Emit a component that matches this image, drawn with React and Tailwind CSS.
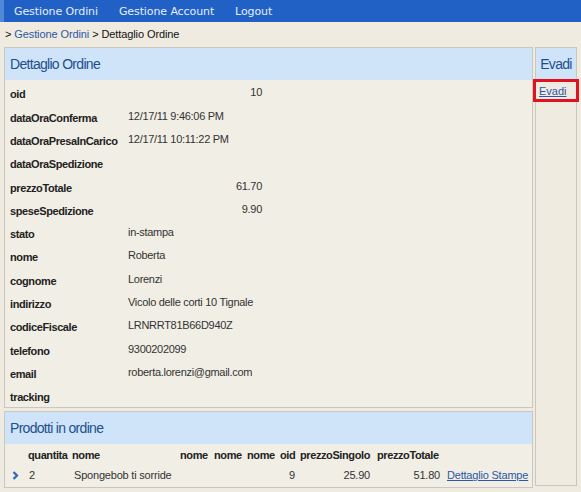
import React from 'react';

const rows = [
  { label: 'oid', value: '10', num: true },
  { label: 'dataOraConferma', value: '12/17/11 9:46:06 PM' },
  { label: 'dataOraPresaInCarico', value: '12/17/11 10:11:22 PM' },
  { label: 'dataOraSpedizione', value: '' },
  { label: 'prezzoTotale', value: '61.70', num: true },
  { label: 'speseSpedizione', value: '9.90', num: true },
  { label: 'stato', value: 'in-stampa' },
  { label: 'nome', value: 'Roberta' },
  { label: 'cognome', value: 'Lorenzi' },
  { label: 'indirizzo', value: 'Vicolo delle corti 10 Tignale' },
  { label: 'codiceFiscale', value: 'LRNRRT81B66D940Z' },
  { label: 'telefono', value: '9300202099' },
  { label: 'email', value: 'roberta.lorenzi@gmail.com' },
  { label: 'tracking', value: '' },
];

function Chevron() {
  return (
    <svg width="7" height="9" viewBox="0 0 7 9">
      <polyline points="1.5,1 5,4.5 1.5,8" fill="none" stroke="#2a68b8" strokeWidth="2.2" />
    </svg>
  );
}

export default function App() {
  return (
    <div className="w-[581px] h-[492px] overflow-hidden bg-[#efebe0] font-['Liberation_Sans',Arial,sans-serif] text-[11px] text-[#222]">
      {/* top nav */}
      <div className="h-[22px] bg-[#2161c6] border-l-4 border-[#5089d8] flex items-center pl-[10px] pt-[2px] gap-[21px] font-['DejaVu_Sans',Verdana,sans-serif] text-[11px] tracking-[-0.1px] text-[#e6ecf6]">
        <span>Gestione Ordini</span>
        <span>Gestione Account</span>
        <span>Logout</span>
      </div>

      {/* breadcrumb */}
      <div className="h-[25px] flex items-center pl-[5px] text-[#111] tracking-[-0.1px]">
        <span>&gt;&nbsp;</span>
        <a className="text-[#2b58a6]">Gestione Ordini</a>
        <span>&nbsp;&gt; Dettaglio Ordine</span>
      </div>

      <div className="flex pl-[4px] gap-[2px]">
        {/* left column */}
        <div className="w-[529px] flex flex-col">
          <div className="border border-[#c9c7c0] bg-[#f1eee5]">
            <div className="h-[32px] bg-[#cfe4f8] flex items-center pl-[5px] text-[14px] tracking-[-0.7px] text-[#1d4f8e]">
              Dettaglio Ordine
            </div>
            <div className="flex flex-col pb-[1px]">
              {rows.map((r) => (
                <div key={r.label} className="h-[23.3px] flex items-center pl-[5px]">
                  <div className="w-[118px] pt-[6px] font-bold tracking-[-0.4px] text-[#222]">{r.label}</div>
                  <div className={`pt-[2px] tracking-[-0.3px] text-[#333] ${r.num ? 'w-[134px] text-right' : ''}`}>{r.value}</div>
                </div>
              ))}
            </div>
          </div>

          <div className="mt-[3px] border border-[#c9c7c0] bg-[#f1eee5]">
            <div className="h-[32px] bg-[#cfe4f8] flex items-center pl-[5px] text-[14px] tracking-[-0.7px] text-[#1d4f8e]">
              Prodotti in ordine
            </div>
            <div className="flex flex-col pb-[2px]">
              <div className="h-[22px] flex items-center font-bold tracking-[-0.4px] text-[#222]">
                <div className="w-[23px]" />
                <div className="w-[44px]">quantita</div>
                <div className="w-[108px]">nome</div>
                <div className="w-[34px]">nome</div>
                <div className="w-[33px]">nome</div>
                <div className="w-[33px]">nome</div>
                <div className="w-[20px]">oid</div>
                <div className="w-[77px]">prezzoSingolo</div>
                <div className="w-[66px]">prezzoTotale</div>
              </div>
              <div className="h-[19px] flex items-center tracking-[-0.2px] text-[#333]">
                <div className="w-[23px] pl-[7px] flex items-center"><Chevron /></div>
                <div className="w-[44px] pl-[1px]">2</div>
                <div className="w-[108px] pl-[2px]">Spongebob ti sorride</div>
                <div className="w-[34px]" />
                <div className="w-[33px]" />
                <div className="w-[33px]" />
                <div className="w-[20px] text-right pr-[5px]">9</div>
                <div className="w-[77px] text-right pr-[7px]">25.90</div>
                <div className="w-[66px] text-right pr-[3px]">51.80</div>
                <a className="pl-[4px] text-[#2b58a6] underline">Dettaglio Stampe</a>
              </div>
            </div>
          </div>
        </div>

        {/* right column */}
        <div className="w-[42px] h-[439px] border border-[#c9c7c0] flex flex-col">
          <div className="h-[32px] bg-[#cfe4f8] flex items-center justify-center text-[14px] tracking-[-0.7px] text-[#1d4f8e]">
            Evadi
          </div>
          <div className="relative h-[22px] flex items-center pl-[3px]">
            <a className="text-[#2b58a6] underline text-[11px]">Evadi</a>
            <div className="absolute -left-[3px] -right-[3px] -top-[1px] bottom-0 border-[3px] border-[#e0121d]" />
          </div>
        </div>
      </div>
    </div>
  );
}
